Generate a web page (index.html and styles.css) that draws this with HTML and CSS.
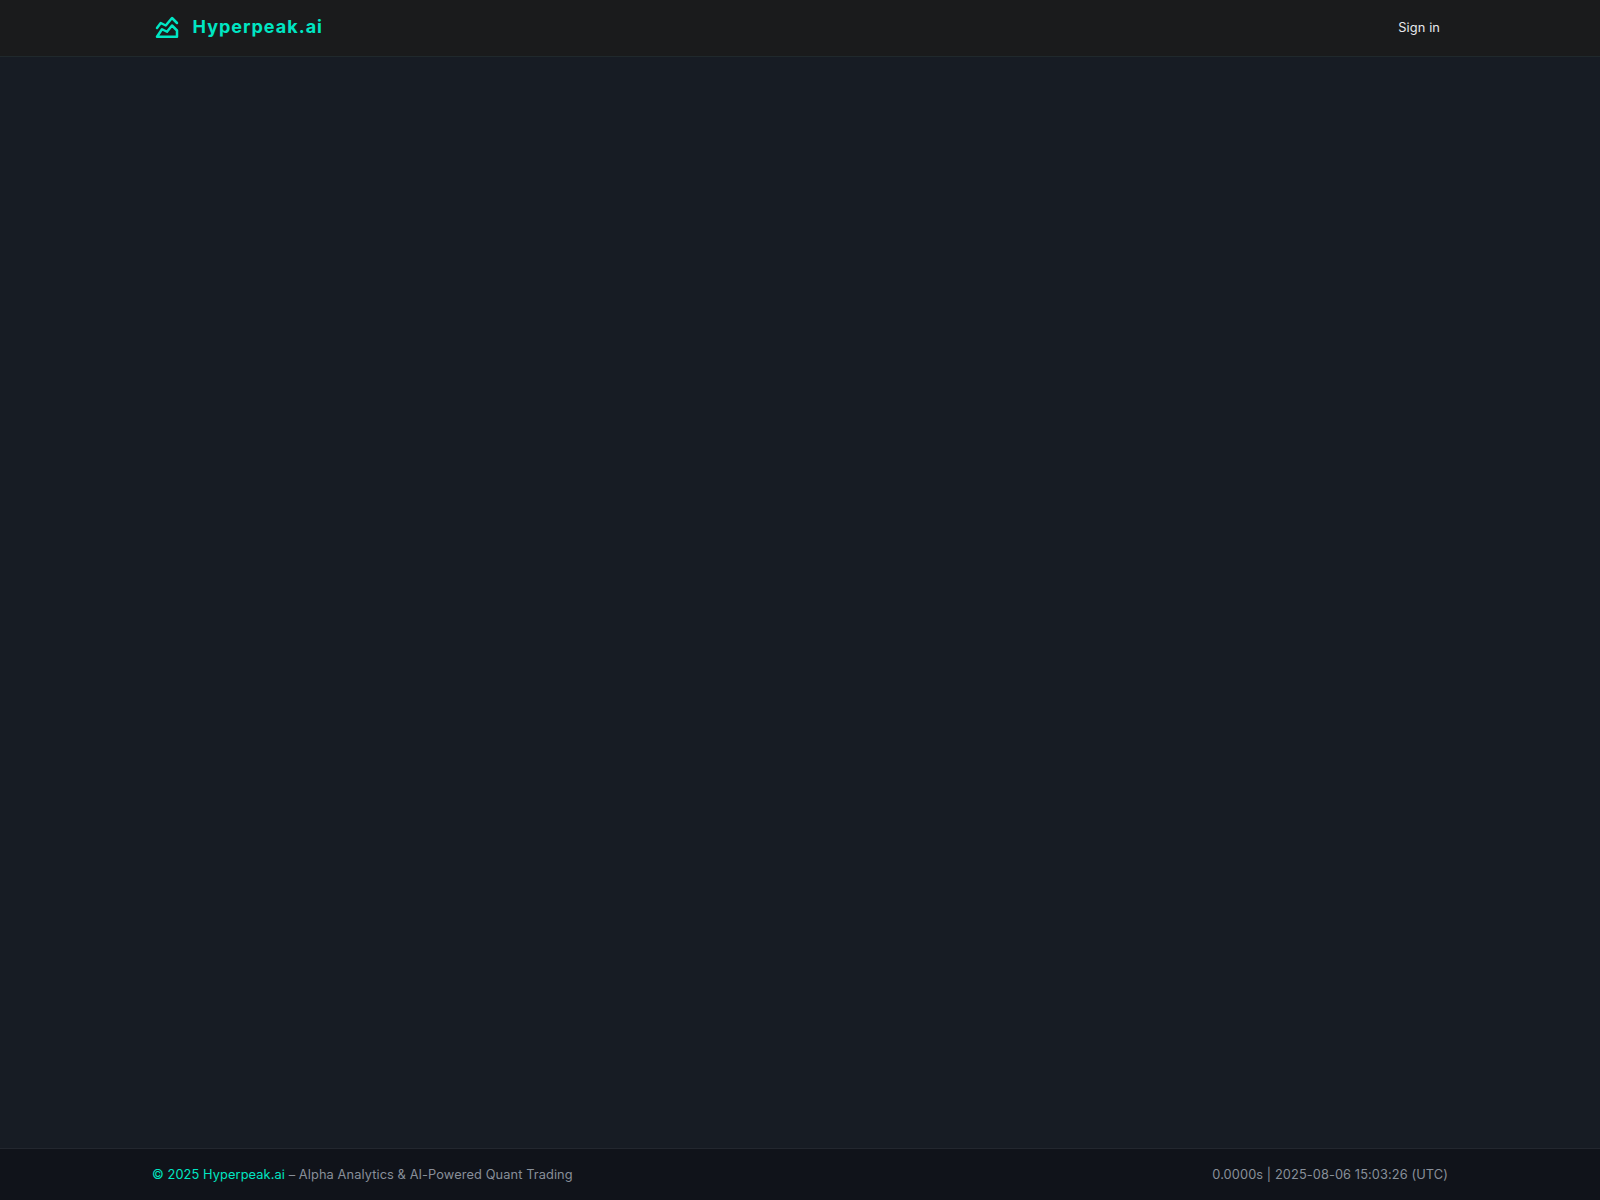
FILE: index.html
```html
<!DOCTYPE html>
<html lang="en">
<head>
	<meta charset="UTF-8">
	<title>Hyperpeak.ai</title>
	<link rel="stylesheet" href="styles.css">
</head>
<body>
<header class="header">
	<div class="container">
		<a class="brand" href="#">
			<svg class="logo" viewBox="0 0 24 24" width="30" height="30">
				<path d="M4 19l4 -6l4 2l4 -5l4 4v5z"/>
				<path d="M4 12l3 -4l4 2l5 -6l4 4"/>
			</svg>
			<span class="name">Hyperpeak.ai</span>
		</a>
		<a class="signin" href="#">Sign in</a>
	</div>
</header>
<main class="main"></main>
<footer class="footer">
	<div class="container">
		<div><span class="accent">© 2025 Hyperpeak.ai</span> – Alpha Analytics &amp; AI-Powered Quant Trading</div>
		<div>0.0000s | 2025-08-06 15:03:26 (UTC)</div>
	</div>
</footer>
</body>
</html>
```
FILE: styles.css
```css
*{box-sizing: border-box;margin: 0;padding: 0;}
body{
	min-height: 100vh;display: flex;flex-direction: column;
	background: #171c24;color: #fff;
	font: 12.8px/20px Inter, "Liberation Sans", sans-serif;letter-spacing: .1px;
}
a{text-decoration: none;}
.container{
	width: 1296px;height: 100%;margin: 0 auto;
	display: flex;align-items: center;justify-content: space-between;
}
.header{height: 57px;background: #1a1b1c;border-bottom: 1px solid #20292c;}
.brand{
	display: flex;align-items: center;gap: 10.5px;
	color: #00e6c3;font-size: 18px;font-weight: 700;letter-spacing: 1px;
}
.logo{fill: none;stroke: currentColor;stroke-width: 2;stroke-linecap: round;stroke-linejoin: round;}
.name{padding-bottom: 2px;}
.signin{padding: 0 8px;color: #e8eaed;}
.main{flex: 1;}
.footer{
	height: 52px;background: #10131a;border-top: 1px solid #23272f;
	color: #888f99;
}
.accent{color: #00e6c3;}
```
